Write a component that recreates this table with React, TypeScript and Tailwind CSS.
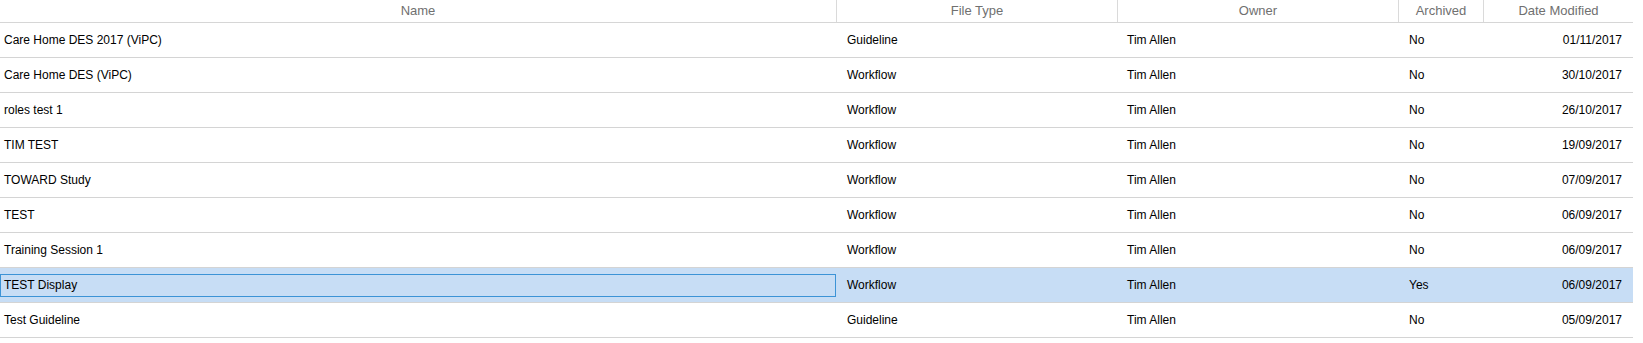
import React from 'react';

type FileRow = {
  name: string;
  fileType: string;
  owner: string;
  archived: string;
  modified: string;
};

const rows: FileRow[] = [
  { name: 'Care Home DES 2017 (ViPC)', fileType: 'Guideline', owner: 'Tim Allen', archived: 'No', modified: '01/11/2017' },
  { name: 'Care Home DES (ViPC)', fileType: 'Workflow', owner: 'Tim Allen', archived: 'No', modified: '30/10/2017' },
  { name: 'roles test 1', fileType: 'Workflow', owner: 'Tim Allen', archived: 'No', modified: '26/10/2017' },
  { name: 'TIM TEST', fileType: 'Workflow', owner: 'Tim Allen', archived: 'No', modified: '19/09/2017' },
  { name: 'TOWARD Study', fileType: 'Workflow', owner: 'Tim Allen', archived: 'No', modified: '07/09/2017' },
  { name: 'TEST', fileType: 'Workflow', owner: 'Tim Allen', archived: 'No', modified: '06/09/2017' },
  { name: 'Training Session 1', fileType: 'Workflow', owner: 'Tim Allen', archived: 'No', modified: '06/09/2017' },
  { name: 'TEST Display', fileType: 'Workflow', owner: 'Tim Allen', archived: 'Yes', modified: '06/09/2017' },
  { name: 'Test Guideline', fileType: 'Guideline', owner: 'Tim Allen', archived: 'No', modified: '05/09/2017' },
];

const SELECTED = 7;

export default function App() {
  return (
    <div className="w-[1643px] h-[343px] bg-white overflow-hidden font-['Liberation_Sans',Arial,sans-serif] text-[12px] text-black">
      <div className="w-[1633px]">
        {/* Header */}
        <div className="grid grid-cols-[836px_281px_281px_85px_150px] h-[23px] border-b border-[#d6d6d6] text-[13px] text-[#707070]">
          <div className="flex items-center justify-center">Name</div>
          <div className="flex items-center justify-center border-l border-[#dadada]">File Type</div>
          <div className="flex items-center justify-center border-l border-[#dadada]">Owner</div>
          <div className="flex items-center justify-center border-l border-[#dadada]">Archived</div>
          <div className="flex items-center justify-center border-l border-[#dadada]">Date Modified</div>
        </div>

        {/* Rows */}
        {rows.map((row, i) => {
          const selected = i === SELECTED;
          return (
            <div
              key={row.name}
              className={
                'grid grid-cols-[836px_281px_281px_85px_150px] h-[35px] border-b border-[#d4d4d4] ' +
                (selected ? 'bg-[#c7ddf5]' : 'bg-white')
              }
            >
              <div className="flex items-center">
                {selected ? (
                  <div className="w-full h-[23px] flex items-center pl-[3px] border border-[#3c93d6]">{row.name}</div>
                ) : (
                  <div className="pl-[4px]">{row.name}</div>
                )}
              </div>
              <div className="flex items-center pl-[11px]">{row.fileType}</div>
              <div className="flex items-center pl-[10px]">{row.owner}</div>
              <div className="flex items-center pl-[11px]">{row.archived}</div>
              <div className="flex items-center justify-end pr-[11px]">{row.modified}</div>
            </div>
          );
        })}
      </div>
    </div>
  );
}
